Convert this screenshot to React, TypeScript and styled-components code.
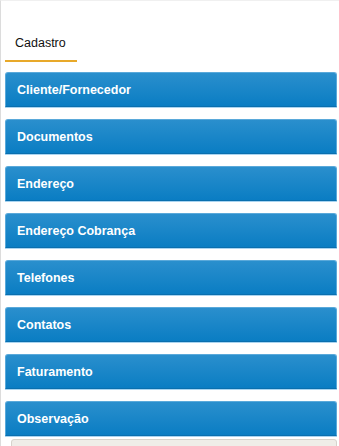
import React from "react";
import styled, { createGlobalStyle } from "styled-components";

const Global = createGlobalStyle`
  html, body { margin: 0; padding: 0; background: #fff; }
  body { font-family: "Liberation Sans", Arial, sans-serif; }
`;

const Frame = styled.div`
  width: 339px;
  height: 446px;
  box-sizing: border-box;
  border-left: 1px solid #dcdcdc;
  border-top: 1px solid #f0f0f0;
  padding: 0 2px 0 4px;
  overflow: hidden;
`;

const TabBar = styled.div`
  display: flex;
  height: 61px;
  align-items: flex-end;
  margin-bottom: 10px;
`;

const Tab = styled.div<{ $active?: boolean }>`
  width: 72px;
  box-sizing: border-box;
  padding: 0 0 10px 10px;
  font-size: 12.5px;
  color: #111;
  border-bottom: 2px solid ${(p) => (p.$active ? "#e8a92a" : "transparent")};
`;

const Stack = styled.div`
  display: flex;
  flex-direction: column;
  gap: 12px;
`;

const Panel = styled.div``;

const Header = styled.div`
  height: 35px;
  box-sizing: border-box;
  display: flex;
  align-items: center;
  padding-left: 11px;
  color: #fff;
  font-weight: bold;
  font-size: 12.5px;
  background: linear-gradient(#2a8fcd, #0a7dc3);
  border: 1px solid #5aa9da;
  border-bottom: 1px solid #0a6fae;
  border-radius: 3px 3px 0 0;
  box-shadow: 0 1px 0 #a9d4f0;
`;

const Content = styled.div`
  margin: 3px 0 0 6px;
  height: 20px;
  background: #efede8;
  border: 1px solid #d6d3cc;
  border-radius: 3px;
`;

const items = [
  "Cliente/Fornecedor",
  "Documentos",
  "Endereço",
  "Endereço Cobrança",
  "Telefones",
  "Contatos",
  "Faturamento",
];

export default function App() {
  return (
    <>
      <Global />
      <Frame>
        <TabBar>
          <Tab $active>Cadastro</Tab>
        </TabBar>
        <Stack>
          {items.map((t) => (
            <Panel key={t}>
              <Header>{t}</Header>
            </Panel>
          ))}
          <Panel>
            <Header>Observação</Header>
            <Content />
          </Panel>
        </Stack>
      </Frame>
    </>
  );
}
